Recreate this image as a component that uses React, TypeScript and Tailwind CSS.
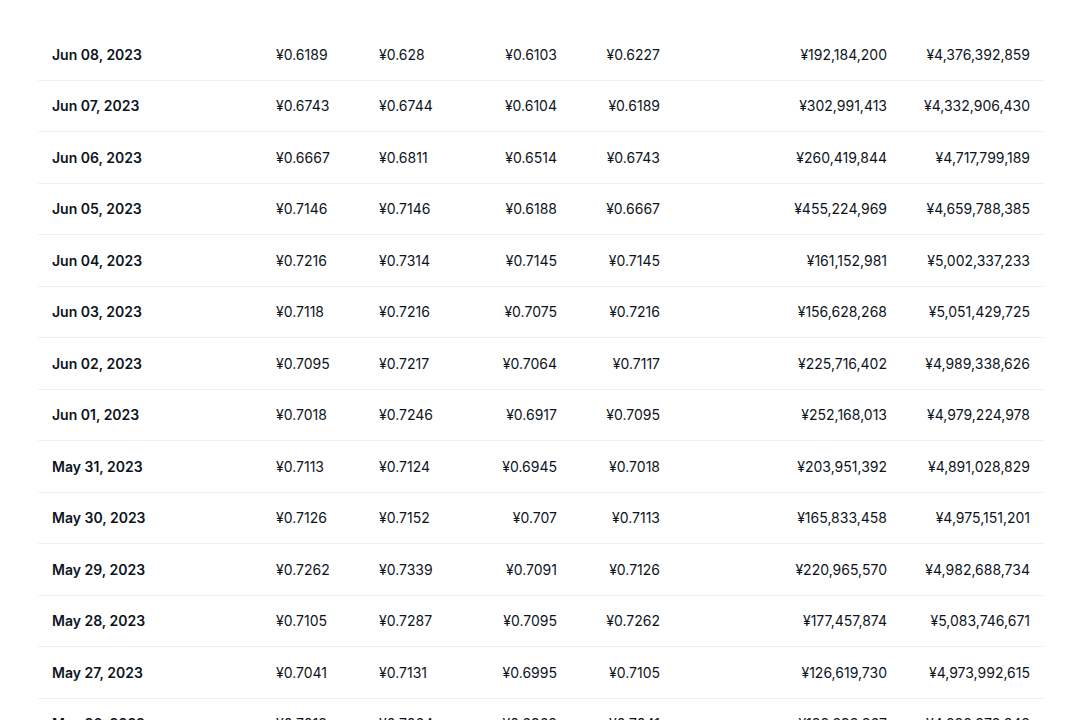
const rows: string[][] = [
  ['Jun 08, 2023', '¥0.6189', '¥0.628', '¥0.6103', '¥0.6227', '¥192,184,200', '¥4,376,392,859'],
  ['Jun 07, 2023', '¥0.6743', '¥0.6744', '¥0.6104', '¥0.6189', '¥302,991,413', '¥4,332,906,430'],
  ['Jun 06, 2023', '¥0.6667', '¥0.6811', '¥0.6514', '¥0.6743', '¥260,419,844', '¥4,717,799,189'],
  ['Jun 05, 2023', '¥0.7146', '¥0.7146', '¥0.6188', '¥0.6667', '¥455,224,969', '¥4,659,788,385'],
  ['Jun 04, 2023', '¥0.7216', '¥0.7314', '¥0.7145', '¥0.7145', '¥161,152,981', '¥5,002,337,233'],
  ['Jun 03, 2023', '¥0.7118', '¥0.7216', '¥0.7075', '¥0.7216', '¥156,628,268', '¥5,051,429,725'],
  ['Jun 02, 2023', '¥0.7095', '¥0.7217', '¥0.7064', '¥0.7117', '¥225,716,402', '¥4,989,338,626'],
  ['Jun 01, 2023', '¥0.7018', '¥0.7246', '¥0.6917', '¥0.7095', '¥252,168,013', '¥4,979,224,978'],
  ['May 31, 2023', '¥0.7113', '¥0.7124', '¥0.6945', '¥0.7018', '¥203,951,392', '¥4,891,028,829'],
  ['May 30, 2023', '¥0.7126', '¥0.7152', '¥0.707', '¥0.7113', '¥165,833,458', '¥4,975,151,201'],
  ['May 29, 2023', '¥0.7262', '¥0.7339', '¥0.7091', '¥0.7126', '¥220,965,570', '¥4,982,688,734'],
  ['May 28, 2023', '¥0.7105', '¥0.7287', '¥0.7095', '¥0.7262', '¥177,457,874', '¥5,083,746,671'],
  ['May 27, 2023', '¥0.7041', '¥0.7131', '¥0.6995', '¥0.7105', '¥126,619,730', '¥4,973,992,615'],
  ['May 26, 2023', '¥0.7013', '¥0.7064', '¥0.6968', '¥0.7041', '¥138,393,367', '¥4,888,378,343'],
];

const App = () => {
  return (
    <div
      className="w-[1070px] h-[720px] overflow-hidden bg-white pt-[29px] pl-[38px]"
      style={{ fontFamily: 'Inter, "Liberation Sans", sans-serif' }}
    >
      <div className="w-[1006px] text-[14px] text-[#0d1421]">
        {rows.map((r) => (
          <div
            key={r[0]}
            className="grid grid-cols-[224px_103px_105px_101px_103px_227px_143px] h-[51.5px] items-center border-b border-[#eff2f5]"
          >
            <div className="px-[14px] font-semibold">{r[0]}</div>
            <div className="px-[14px] text-left">{r[1]}</div>
            <div className="px-[14px] text-left">{r[2]}</div>
            <div className="px-[14px] text-right">{r[3]}</div>
            <div className="px-[14px] text-right">{r[4]}</div>
            <div className="px-[14px] text-right">{r[5]}</div>
            <div className="px-[14px] text-right">{r[6]}</div>
          </div>
        ))}
      </div>
    </div>
  );
};

export default App;
